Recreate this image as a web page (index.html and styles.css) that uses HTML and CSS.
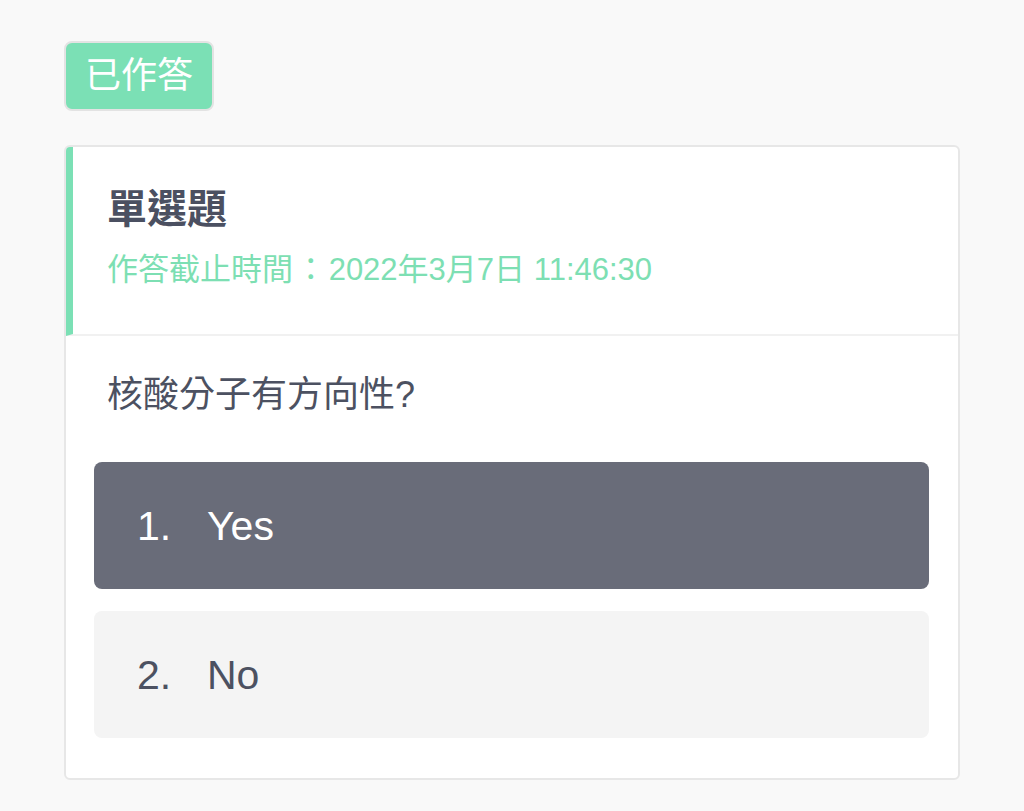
FILE: index.html
```html
<!DOCTYPE html>
<html lang="zh-Hant">
<head>
<meta charset="utf-8">
<title>單選題</title>
<link rel="stylesheet" href="styles.css">
</head>
<body>
<div class="page">
  <div class="badge">已作答</div>
  <div class="card">
    <div class="card-header">
      <div class="title">單選題</div>
      <div class="deadline">作答截止時間<span class="colon">：</span>2022年3月7日 11:46:30</div>
    </div>
    <div class="card-body">
      <div class="question">核酸分子有方向性?</div>
      <div class="options">
        <div class="option selected"><span class="num">1.</span><span class="label">Yes</span></div>
        <div class="option"><span class="num">2.</span><span class="label">No</span></div>
      </div>
    </div>
  </div>
</div>
</body>
</html>
```

FILE: styles.css
```css
* { box-sizing: border-box; }
html, body {
  margin: 0;
  padding: 0;
  background: #f9f9f9;
}
body {
  font-family: "Liberation Sans", "Noto Sans CJK TC", sans-serif;
  color: #4c5161;
}
.page {
  padding: 41px 64px 30px;
  display: flex;
  flex-direction: column;
  align-items: flex-start;
  gap: 34px;
}
.badge {
  width: 150px;
  height: 70px;
  display: flex;
  align-items: center;
  justify-content: center;
  background: #7be0b5;
  border: 2px solid #e3e3e3;
  border-radius: 8px;
  color: #ffffff;
  font-size: 36px;
  line-height: 1;
}
.card {
  width: 100%;
  background: #ffffff;
  border: 2px solid #e7e7e7;
  border-radius: 6px;
  overflow: hidden;
}
.card-header {
  border-left: 7px solid #7be0b5;
  border-bottom: 2px solid #f1f1f1;
  padding: 34px 34px 42px;
}
.title {
  font-size: 40px;
  line-height: 56px;
  font-weight: bold;
  color: #4b5061;
}
.deadline {
  margin-top: 11px;
  font-size: 31px;
  line-height: 44px;
  color: #7ddfb3;
}
.colon {
  display: inline-block;
  width: 1.15em;
  text-align: center;
}
.card-body {
  padding: 34px 29px 40px 28px;
}
.question {
  font-size: 36px;
  line-height: 50px;
  padding-left: 13px;
  color: #4c5161;
}
.options {
  margin-top: 42px;
  display: flex;
  flex-direction: column;
  gap: 22px;
}
.option {
  height: 127px;
  display: flex;
  align-items: center;
  padding: 0 43px;
  border-radius: 8px;
  background: #f4f4f4;
  color: #4c5161;
  font-size: 41px;
  line-height: 56px;
}
.option.selected {
  background: #696c79;
  color: #ffffff;
}
.num {
  width: 70px;
  flex: none;
}
```
